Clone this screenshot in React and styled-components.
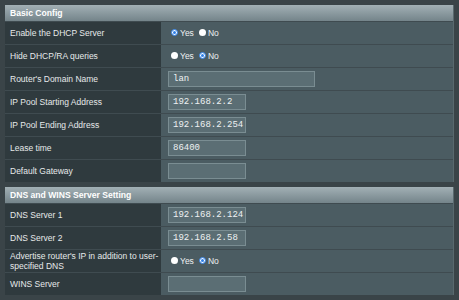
import React from "react";
import styled, { createGlobalStyle } from "styled-components";

const Global = createGlobalStyle`
  html, body { margin: 0; padding: 0; background: #3a4448; }
  body { font-family: Arial, "Liberation Sans", sans-serif; }
`;

const Page = styled.div`
  width: 459px;
  height: 300px;
  overflow: hidden;
  box-sizing: border-box;
  padding: 5px 0 0 5px;
  background: #3a4448;
  display: flex;
  flex-direction: column;
  gap: 5px;
`;

const Table = styled.div`
  width: 448px;
  border-right: 1px solid #59696e;
  display: flex;
  flex-direction: column;
  background: #3f4b50;
  gap: 1px;
`;

const Header = styled.div`
  height: 16px;
  display: flex;
  align-items: center;
  padding-left: 5px;
  color: #fff;
  font-weight: bold;
  font-size: 8.6px;
  background: linear-gradient(#a2b0b5, #74848a);
`;

const Row = styled.div`
  display: grid;
  grid-template-columns: 156px 1fr;
  height: 22px;
`;

const Label = styled.div`
  background: #2f3a3e;
  color: #e6e9ea;
  font-size: 8.5px;
  line-height: 10px;
  padding: 0 1px 0 5px;
  display: flex;
  align-items: center;
`;

const Value = styled.div`
  background: #4b5c62;
  display: flex;
  align-items: center;
  padding-left: ${(p) => (p.$radio ? 10 : 7)}px;
  gap: 5px;
`;

const Input = styled.div`
  box-sizing: border-box;
  width: ${(p) => p.$w}px;
  height: 16px;
  background: #5b6e74;
  border: 1px solid #7a8d92;
  color: #eef1f2;
  font-family: "Liberation Mono", "DejaVu Sans Mono", monospace;
  font-size: 9px;
  display: flex;
  align-items: center;
  padding-left: 4px;
`;

const RadioLabel = styled.span`
  display: inline-flex;
  align-items: center;
  gap: 2px;
  color: #eef0f1;
  font-size: 8.5px;
`;

const RadioDot = styled.span`
  box-sizing: border-box;
  width: 7px;
  height: 7px;
  border-radius: 50%;
  background: #fff;
  border: ${(p) => (p.$on ? "1.5px solid #2f7fe6" : "none")};
  box-shadow: ${(p) => (p.$on ? "inset 0 0 0 1px #fff, inset 0 0 0 4px #2f7fe6" : "none")};
  position: relative;
  top: -1px;
`;

const Radio = ({ on, children }) => (
  <RadioLabel>
    <RadioDot $on={on} />
    {children}
  </RadioLabel>
);

const YesNo = ({ yes }) => (
  <Value $radio>
    <Radio on={yes}>Yes</Radio>
    <Radio on={!yes}>No</Radio>
  </Value>
);

const Field = ({ w, children }) => (
  <Value>
    <Input $w={w}>{children}</Input>
  </Value>
);

export default function App() {
  return (
    <>
      <Global />
      <Page>
        <Table>
          <Header>Basic Config</Header>
          <Row><Label>Enable the DHCP Server</Label><YesNo yes /></Row>
          <Row><Label>Hide DHCP/RA queries</Label><YesNo yes={false} /></Row>
          <Row><Label>Router's Domain Name</Label><Field w={147}>lan</Field></Row>
          <Row><Label>IP Pool Starting Address</Label><Field w={78}>192.168.2.2</Field></Row>
          <Row><Label>IP Pool Ending Address</Label><Field w={78}>192.168.2.254</Field></Row>
          <Row><Label>Lease time</Label><Field w={78}>86400</Field></Row>
          <Row><Label>Default Gateway</Label><Field w={78}></Field></Row>
        </Table>
        <Table>
          <Header>DNS and WINS Server Setting</Header>
          <Row><Label>DNS Server 1</Label><Field w={78}>192.168.2.124</Field></Row>
          <Row><Label>DNS Server 2</Label><Field w={78}>192.168.2.58</Field></Row>
          <Row><Label>Advertise router's IP in addition to user-specified DNS</Label><YesNo yes={false} /></Row>
          <Row><Label>WINS Server</Label><Field w={78}></Field></Row>
        </Table>
      </Page>
    </>
  );
}
